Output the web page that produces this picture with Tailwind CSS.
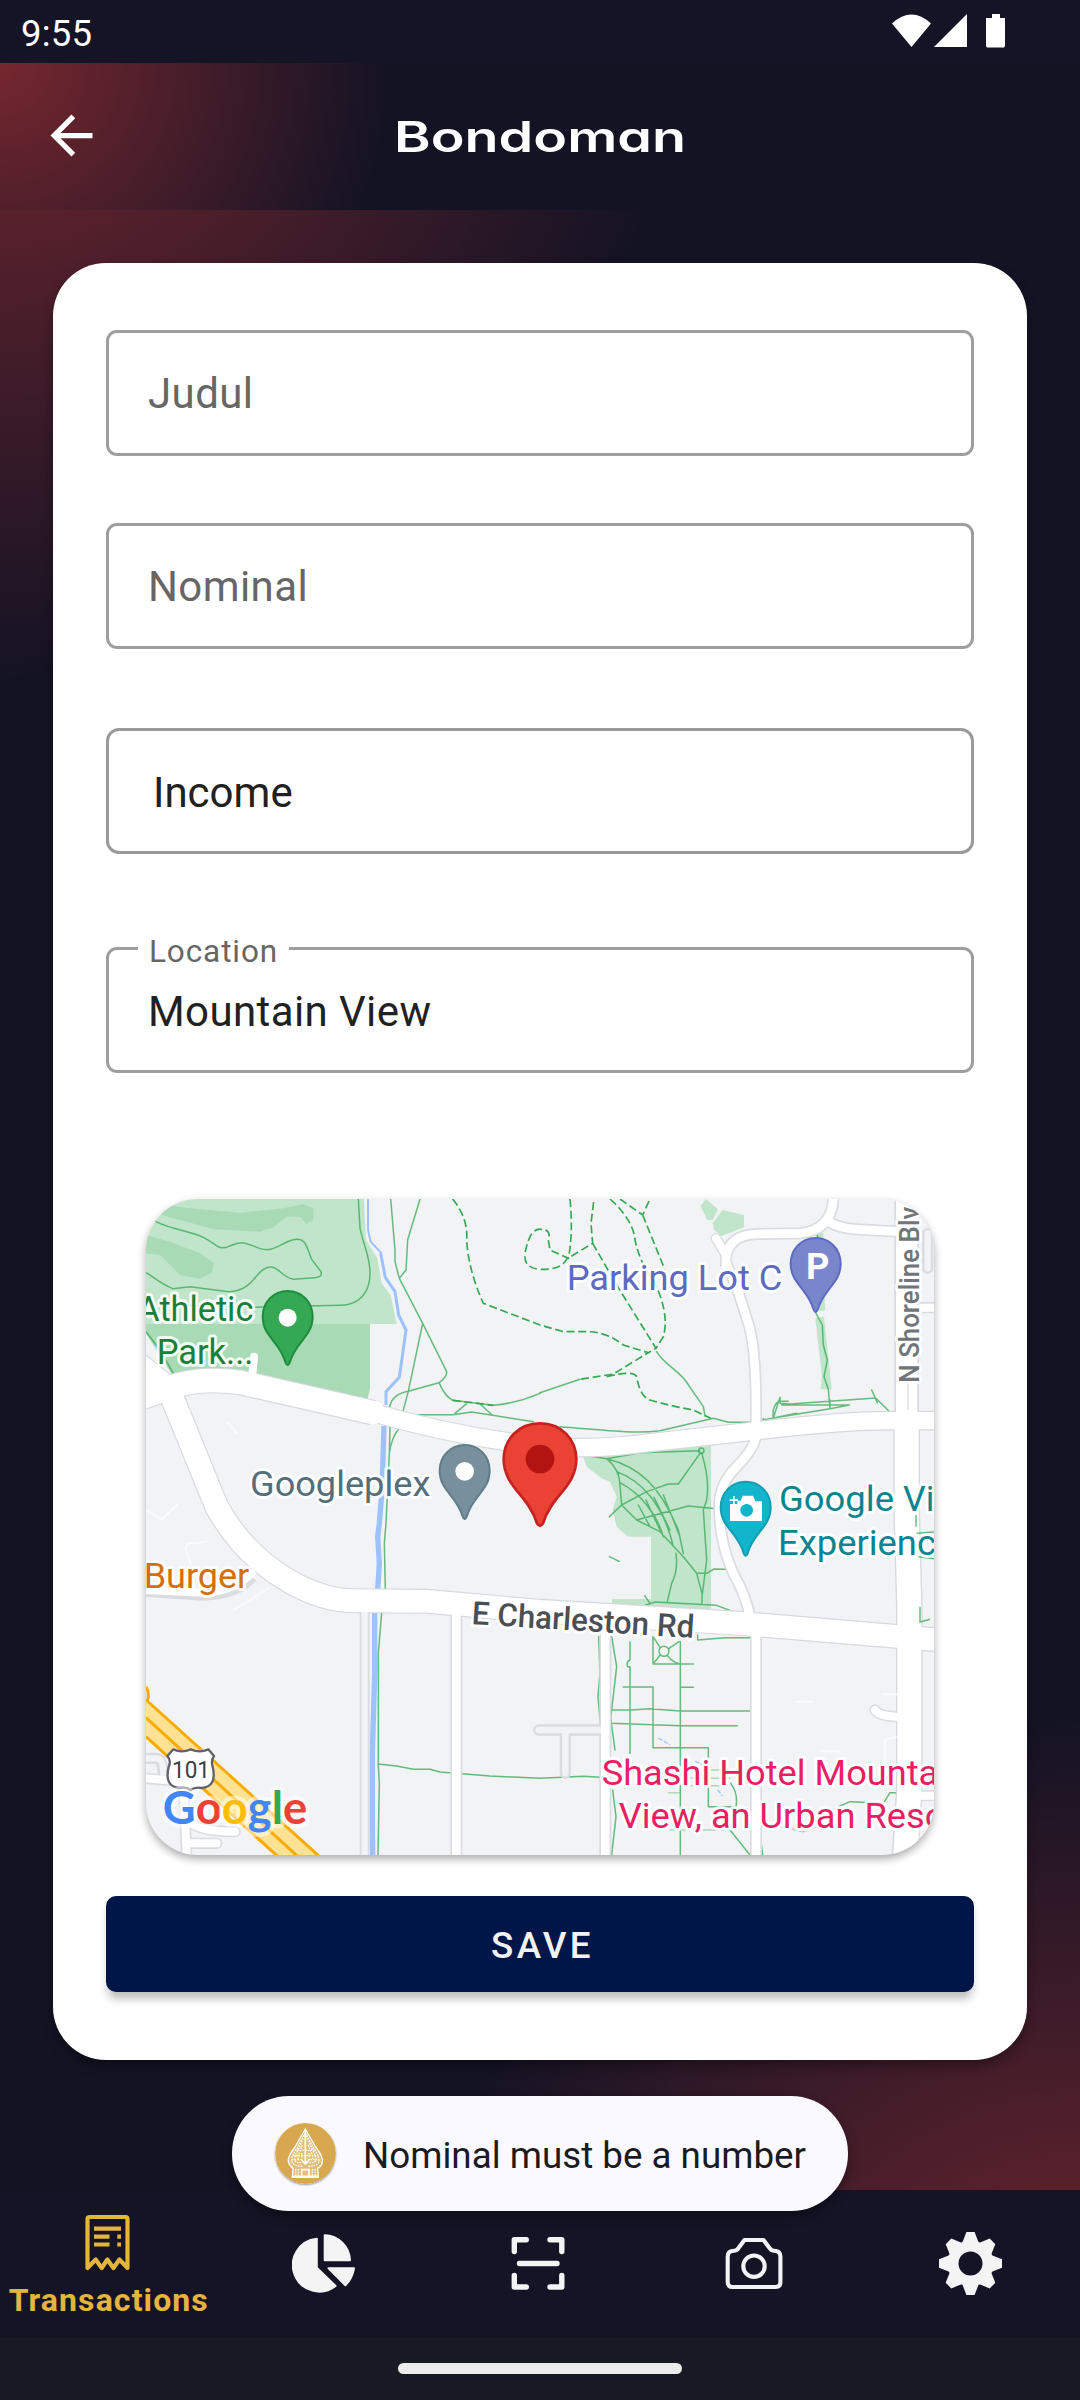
<!DOCTYPE html>
<html lang="id">
<head>
<meta charset="utf-8">
<title>Bondoman</title>
<script src="https://cdn.jsdelivr.net/npm/@tailwindcss/browser@4"></script>
</head>
<body class="w-[1080px] h-[2400px] overflow-hidden flex flex-col font-['Roboto',sans-serif] bg-[#141324]">

<!-- status bar -->
<header class="h-[63px] shrink-0 bg-[#151426] flex items-center justify-between pl-[21px] pr-[69px] text-white">
  <span class="text-[36.5px] leading-[63px] tracking-[0.2px] pt-[3px]">9:55</span>
  <svg class="w-[120px] h-[36px] mt-[-2px]" viewBox="0 0 120 36" fill="#fff">
    <path d="M1 10.500Q20.500-7.500 40 10.500L20.500 34Z"/>
    <path d="M43 34L76 1V34Z"/>
    <path d="M101 1h8v4h5v28l-1 1.500h-17l-1-1.500H95V5h6z"/>
  </svg>
</header>

<!-- app bar -->
<div class="h-[147px] shrink-0 flex items-center bg-[radial-gradient(circle_388px_at_0_0,#76272f_0%,#141324_100%)]">
  <svg class="w-[63px] h-[63px] ml-[40px] mb-[2px]" viewBox="0 0 24 24" fill="#fff"><path d="M20 11H7.830l5.590-5.590L12 4l-8 8 8 8 1.410-1.410L7.830 13H20z"/></svg>
  <svg class="w-[310px] h-[65px] ml-[282px]" viewBox="0 0 310 65">
    <text x="9" y="48" class="font-['Inter',sans-serif] font-semibold text-[42px] [font-feature-settings:'cv11']" fill="#fff" textLength="292" lengthAdjust="spacingAndGlyphs">Bondoman</text>
  </svg>
</div>

<main class="h-[1980px] shrink-0 px-[53px] pt-[53px] bg-[radial-gradient(circle_680px_at_0_-210px,#76272f_0%,rgba(20,19,36,0)_100%),radial-gradient(circle_680px_at_1080px_2190px,#76272f_0%,rgba(20,19,36,0)_100%)]">
  <section class="h-[1797px] rounded-[53px] bg-white px-[53px] pt-[67px] flex flex-col shadow-[0_6px_12px_rgba(0,0,0,0.35)] tracking-[0.4px] text-[42px]">
    <div class="h-[126px] shrink-0 border-[3px] border-[#9e9e9e] rounded-[11px] flex items-center pl-[39px] text-[#666]">Judul</div>
    <div class="h-[126px] shrink-0 mt-[67px] border-[3px] border-[#9e9e9e] rounded-[11px] flex items-center pl-[39px] text-[#666]">Nominal</div>
    <div class="h-[126px] shrink-0 mt-[79px] border-[3px] border-[#9a9a9a] rounded-[13px] flex items-center pl-[44px] pt-[2px] text-[#212121] tracking-normal">Income</div>
    <div class="h-[126px] shrink-0 mt-[93px] border-[3px] border-[#9e9e9e] rounded-[11px] relative flex items-center pl-[39px] pt-[2px] text-[#212121] tracking-[0.4px]">
      <span class="absolute left-[29px] top-[-17px] px-[11px] bg-white text-[#666] text-[31.5px] leading-[38px] tracking-[0.9px]">Location</span>
      Mountain View
    </div>

    <!-- map -->
    <div class="w-[788px] h-[656px] shrink-0 mt-[126px] ml-[40px] rounded-[52px] overflow-hidden bg-[#f1f3f5] shadow-[0_4px_9px_rgba(0,0,0,0.33)]">
      <svg class="w-full h-full block" viewBox="18 27 2364 1968" fill="none">
        <!-- parks -->
        <path fill="#c1e5cb" d="M18 27H672L678 150L712 205L725 280L752 315L770 402H690L18 410Z"/>
        <path fill="#a8dab5" d="M60 42L150 55L300 68L430 55L490 42L520 55V90L500 102L480 80H440L400 112L360 125L220 118L130 92L65 75Z"/>
        <path fill="#a8dab5" d="M18 135L90 155L180 190L222 220L215 248L180 266L120 255L60 195L18 190Z"/>
        <path fill="#a8dab5" d="M18 402H690V595L680 640L100 560L18 430Z"/>
        <g fill="#c1e5cb">
          <path d="M1682 48L1698 27L1734 58L1718 90H1702Z"/>
          <path d="M1718 98L1748 60L1812 75V112L1745 138L1722 120Z"/>
          <path d="M2028 128H2050L2055 362H2036ZM2026 385L2052 380L2075 598H2042L2046 560Z"/>
          <path d="M1328 797L1400 790L1713 762V1264L1416 1240V1227H1533V1040H1465L1430 1010L1418 960L1430 920L1410 875L1385 865L1340 830Z"/>
        </g>
        <!-- creek -->
        <g stroke="#9dc2ff" fill="none">
          <path stroke-width="6" d="M684 27V120L692 155L725 190"/>
          <path stroke-width="9" d="M722 190L736 262L765 305L776 375L798 420L778 562L738 605V645"/>
          <path stroke-width="16" d="M732 708L726 900L718 1000L713 1040L718 1120L713 1198M704 1268V1450L697 1690V1920L698 1995"/>
        </g>
        <!-- trails -->
        <g stroke="#34a853" stroke-opacity=".75" stroke-width="4.500" stroke-linejoin="round" stroke-linecap="round">
          <path d="M48 95C90 118 150 122 190 142S235 182 265 170S300 150 350 172S420 158 460 149S500 175 515 208L543 245Q548 262 525 263L460 268C425 260 420 235 395 231S350 260 330 280S280 308 255 304L150 290L98 296C60 280 40 260 18 248"/>
          <path d="M655 27L660 115C675 180 690 200 690 250S665 345 600 346L330 352L110 346"/>
          <path d="M18 425L60 480L100 550"/>
          <path d="M752 27L765 180V215L778 265L848 400L920 545Q922 560 897 578L805 604Q755 612 748 655M840 27L803 150L798 240L778 265M848 400L805 604L788 668L820 674H940L995 666L1180 695M897 578Q915 620 938 631L1060 646Q1130 640 1200 610M945 670L980 641M1020 642L1057 675"/>
          <path d="M750 710L748 790L738 1000L733 1060L736 1200M778 715Q755 740 748 790M725 1268L715 1390V1730L718 1780L714 1995M714 1722L770 1728L820 1738H870L900 1746L1050 1758L1200 1765L1330 1759L1380 1762"/>
          <path d="M1200 608L1320 568M1550 485C1570 520 1600 530 1635 570L1690 650L1695 678M1720 685L1765 697H1835L1970 670M1260 710C1390 720 1480 732 1560 722L1720 685M1900 684L1920 622V640L1950 642L2207 624L2252 668M1900 684L2070 656V630M1925 645H2128L2070 656M2195 600L2212 638M2028 128L2038 150M2028 370L2047 405L2050 465L2062 510L2052 560L2065 598L2070 656M1900 684Q1895 650 1915 634H1945M1870 686V698"/>
          <path d="M1315 793L1400 806L1500 788L1680 782M1685 790Q1710 870 1700 930L1690 960L1700 1110L1686 1220V1240M1400 806Q1440 840 1440 885L1445 945L1520 905L1585 882H1615L1680 790M1445 945L1408 980M1445 945L1490 990L1645 948L1730 956M1400 806C1500 830 1560 890 1615 1020L1630 1090M1430 845C1500 870 1570 940 1600 1070M1440 878C1500 910 1550 970 1570 1040M1490 990L1560 1025L1630 1100L1670 1150L1686 1210M1495 945L1530 1010M1518 930L1560 1020M1542 922L1590 1020M1570 915L1620 1040M1608 1090Q1615 1140 1595 1180L1582 1235M1670 1150H1700L1722 1137L1760 1138M1395 1242L1510 1248L1545 1236L1730 1246L1798 1272M1408 1100L1438 1114M1514 1217L1530 1240"/>
          <circle cx="1684" cy="782" r="8"/>
          <path d="M1376 1340L1380 1450L1374 1520L1382 1610V1760M1415 1340L1430 1430L1412 1585L1425 1680M1418 1800L1428 1880L1415 1995M1470 1356V1410Q1458 1415 1463 1430H1470V1605M1450 1491H1540M1470 1605V1690M1539 1340V1422H1660M1539 1340L1560 1372M1539 1422L1560 1396M1617 1355L1586 1376M1583 1398Q1600 1418 1620 1422M1621 1355V1995M1621 1492H1660M1539 1491V1673H1705V1850H1790M1412 1560H1472L1530 1556L1621 1563H1833M1412 1600L1621 1607H1792M1673 1335V1350L1755 1343H1835"/>
          <circle cx="1572" cy="1384" r="15"/>
          <path stroke-opacity=".35" d="M1455 1795V1740H1830M1560 1765H1770M1590 1787H1740M1586 1808H1620M1590 1920H1770M1860 1895L1990 1925L2060 1900L2100 1850"/>
          <path d="M1772 1780Q1795 1810 1788 1850M1770 1920L1830 1995M1860 1930L1868 1995M2095 1850L2130 1835L2230 1840L2250 1808H2270"/>
        </g>
        <g stroke="#34a853" stroke-width="5" stroke-dasharray="24 11">
          <path d="M938 27Q985 85 980 150Q985 240 1030 340L1200 405L1270 425H1340Q1400 425 1450 465L1525 488L1420 552L1320 568"/>
          <path d="M1290 27Q1300 130 1285 205L1230 180L1225 150Q1235 120 1205 118Q1170 110 1155 190Q1150 235 1200 238Q1265 240 1280 207L1358 160L1353 100L1362 27"/>
          <path d="M1358 160L1430 285L1548 475L1525 488M1410 27Q1480 90 1485 150Q1500 220 1540 270Q1590 370 1570 440L1548 475M1440 27L1508 75L1530 27M1508 75L1575 240M1400 560Q1480 540 1490 560Q1500 620 1530 630Q1600 650 1660 660L1712 685M938 631L1060 646"/>
        </g>
        <path stroke="#9dc2ff" stroke-width="4" stroke-dasharray="14 5" d="M1555 1644L1590 1664M1665 1713L1688 1725M1733 1800L1748 1818"/>
        <!-- small streets -->
        <g stroke="#dadce0" stroke-linejoin="round" stroke-linecap="round" stroke-width="34">
          <path d="M674 1268V1995" stroke-width="30"/>
          <path d="M1196 1620H1385M1276 1630V1750M2205 1560Q2215 1578 2270 1580M2330 1817H2382M2363 130V235M2345 353H2382"/>
          <path d="M18 1765L130 1775L140 1995M130 1880Q160 1925 285 1925M140 1960H230M18 1705H50Q70 1705 70 1770"/>
          <path d="M1728 145L1758 195" stroke-width="32"/>
        </g>
        <g stroke="#dadce0" stroke-width="36" fill="none">
          <path d="M1758 230V205Q1765 135 1850 132L1980 130Q2075 120 2080 27M2065 95Q2100 115 2150 118L2280 125M1758 215Q1770 250 1790 290L1820 385Q1850 460 1848 690V740Q1840 780 1790 830Q1740 880 1738 940Q1735 1050 1780 1150Q1820 1220 1832 1290"/>
          <path d="M949 1270V1995M1396 1310V1995M1848 1340V1995"/>
          <path d="M18 1203L190 1214Q290 1212 335 1160"/>
        </g>
        <!-- main roads -->
        <g stroke="#d7d9de">
          <path stroke-width="75" d="M-20 510L85 595Q140 730 230 950Q310 1095 450 1175Q550 1232 640 1232L860 1234L1200 1264L1800 1300L2400 1350"/>
          <path stroke-width="77" d="M-30 635L85 595Q170 560 300 577L700 668"/>
          <path stroke-width="59" d="M680 664L700 668Q900 726 1100 755Q1250 782 1440 768L1800 728Q2100 692 2250 692H2400"/>
          <path stroke-width="74" d="M2300 27V690"/>
          <path stroke-width="80" d="M2300 690V960L2308 1250V1800L2295 1995"/>
        </g>
        <g stroke="#f1f3f5" stroke-linejoin="round" stroke-linecap="round" stroke-width="19"><path d="M674 1268V1995M1196 1620H1385M1276 1630V1750M18 1705H50Q70 1705 70 1750M2363 130V235"/></g>
        <g stroke="#fff" stroke-linejoin="round" stroke-linecap="round">
          <path stroke-width="24" d="M2205 1560Q2215 1578 2270 1580M2330 1817H2382M2345 353H2382M18 1765L130 1775L140 1995M130 1880Q160 1925 285 1925M140 1960H230M1728 145L1758 195"/>
          <path stroke-width="26" d="M1758 230V205Q1765 135 1850 132L1980 130Q2075 120 2080 27M2065 95Q2100 115 2150 118L2280 125M1758 215Q1770 250 1790 290L1820 385Q1850 460 1848 690V740Q1840 780 1790 830Q1740 880 1738 940Q1735 1050 1780 1150Q1820 1220 1832 1290M949 1250V2005M1396 1290V2005M1848 1310V2005"/>
          <path stroke-width="24" d="M18 1200L190 1208Q280 1205 335 1150"/>
          <path stroke-width="24" d="M338 545L342 500"/>
          <path stroke-width="68" d="M-20 510L85 595Q140 730 230 950Q310 1095 450 1175Q550 1232 640 1232L860 1234L1200 1264L1800 1300L2400 1350"/>
          <path stroke-width="70" d="M-30 635L85 595Q170 560 300 577L700 668"/>
          <path stroke-width="52" d="M700 668Q900 726 1100 755Q1250 782 1440 768L1800 728Q2100 692 2250 692H2400"/>
          <path stroke-width="64" d="M2300 27V690"/>
          <path stroke-width="72" d="M2300 690V960L2308 1250V1800L2295 2010"/>
          <path stroke-width="7" stroke-opacity=".6" d="M262 697L292 732M18 960L65 988L110 945M152 1120Q120 1050 165 1060L200 1055M280 1260L340 1225L385 1195M1970 1535H2018M2230 1513H2272M2045 1684H2100M2270 1640L2235 1650V1720"/>
        </g>
        <g stroke="#34a853" stroke-opacity=".75" stroke-width="4.500"><path d="M2328 975V1010M2340 1250V1296L2370 1288M2330 1030L2382 1026M2335 1100L2382 1106"/></g>
        <path stroke="#dadce0" stroke-width="4" d="M2304 570V660"/>
        <!-- highway -->
        <path fill="#fde293" d="M18 1530L550 2010H425L18 1645Z"/>
        <path stroke="#f9ab00" stroke-width="9" d="M18 1490Q30 1510 22 1533L550 2010M18 1583L485 2010M18 1640L425 2010"/>
        <!-- route shield -->
        <path fill="#fff" stroke="#5f6368" stroke-width="7" stroke-linejoin="round" d="M100 1678Q125 1690 152 1678Q180 1690 205 1678L222 1698Q212 1712 218 1730Q232 1790 185 1794Q165 1790 152 1800Q140 1790 118 1794Q72 1790 86 1730Q95 1712 82 1698Z"/>
        <text x="96" y="1765" font-size="73" fill="#3c4043" textLength="114" lengthAdjust="spacingAndGlyphs" class="tracking-normal">101</text>

        <!-- place labels -->
        <g font-size="107" stroke="#fff" stroke-opacity=".85" stroke-width="18" stroke-linejoin="round" class="[paint-order:stroke] tracking-normal">
          <text x="340" y="394" text-anchor="end" fill="#188038" textLength="348" lengthAdjust="spacingAndGlyphs">Athletic</text>
          <text x="50" y="523" fill="#188038" textLength="290" lengthAdjust="spacingAndGlyphs">Park...</text>
          <text x="330" y="918" fill="#546e7a" textLength="541" lengthAdjust="spacingAndGlyphs">Googleplex</text>
          <text x="1280" y="299" fill="#5c6bc0" textLength="647" lengthAdjust="spacingAndGlyphs">Parking Lot C</text>
          <text x="1917" y="964" fill="#0a8590" textLength="345" lengthAdjust="spacingAndGlyphs">Google</text>
          <text x="2289" y="964" fill="#0a8590">Vi</text>
          <text x="1914" y="1094" fill="#0a8590" textLength="474" lengthAdjust="spacingAndGlyphs">Experienc</text>
          <text x="11" y="1195" fill="#d56e0c" textLength="317" lengthAdjust="spacingAndGlyphs">Burger</text>
          <text x="1385" y="1785" fill="#e91e63" textLength="1010" lengthAdjust="spacingAndGlyphs">Shashi Hotel Mounta</text>
          <text x="1436" y="1914" fill="#e91e63" textLength="980" lengthAdjust="spacingAndGlyphs">View, an Urban Reso</text>
          <text transform="translate(994 1302) rotate(3.600)" font-size="96" font-weight="500" fill="#4b4f54" textLength="668" lengthAdjust="spacingAndGlyphs">E Charleston Rd</text>
          <text transform="translate(2338 578) rotate(-90)" font-size="82" font-weight="500" fill="#70757a" textLength="528" lengthAdjust="spacingAndGlyphs">N Shoreline Blv</text>
        </g>

        <!-- place pins -->
        <g stroke-width="6" stroke-linejoin="round">
          <path fill="#34a853" stroke="#1e8e3e" d="M443 303C400 303 368 337 368 380C368 440 420 455 437 518Q443 533 449 518C466 455 518 440 518 380C518 337 486 303 443 303Z"/>
          <circle cx="443" cy="383" r="27" fill="#fff"/>
          <path fill="#78909c" stroke="#607d8b" transform="translate(531 462)" d="M443 303C400 303 368 337 368 380C368 440 420 455 437 518Q443 533 449 518C466 455 518 440 518 380C518 337 486 303 443 303Z"/>
          <circle cx="974" cy="844" r="28" fill="#fff"/>
          <path fill="#7986cb" stroke="#5c6bc0" transform="translate(1584 -159)" d="M443 303C400 303 368 337 368 380C368 440 420 455 437 518Q443 533 449 518C466 455 518 440 518 380C518 337 486 303 443 303Z"/>
          <text x="1998" y="266" font-size="109" font-weight="700" fill="#fff" stroke="none" class="tracking-normal">P</text>
          <path fill="#12b5cb" stroke="#129eaf" transform="translate(1374 572)" d="M443 303C400 303 368 337 368 380C368 440 420 455 437 518Q443 533 449 518C466 455 518 440 518 380C518 337 486 303 443 303Z"/>
          <path fill="#fff" d="M1770 942h22v-10h10l6-15h31l7 17h20v59h-96zM1779 918h5v10h10v5h-10v10h-5v-10h-10v-5h10z"/>
          <circle cx="1820" cy="961" r="19" fill="#12b5cb"/>
          <path fill="#ea4335" stroke="#c5221f" stroke-width="8" d="M1200 700C1137 700 1091 747 1091 808C1091 890 1165 915 1191 1000Q1200 1015 1209 1000C1235 915 1309 890 1309 808C1309 747 1263 700 1200 700Z"/>
          <circle cx="1200" cy="807" r="43" fill="#b31412"/>
        </g>

        <text x="68" y="1901" font-size="138" font-weight="700" stroke="#fff" stroke-opacity=".5" stroke-width="26" stroke-linejoin="round" textLength="434" lengthAdjust="spacingAndGlyphs" class="font-['Lato',sans-serif] tracking-normal [paint-order:stroke]"><tspan fill="#4285f4">G</tspan><tspan fill="#ea4335">o</tspan><tspan fill="#fbbc04">o</tspan><tspan fill="#4285f4">g</tspan><tspan fill="#34a853">l</tspan><tspan fill="#ea4335">e</tspan></text>
      </svg>
    </div>

    <button class="h-[96px] shrink-0 mt-[41px] rounded-[10px] bg-[#001649] text-[#f3f3f3] text-[36.75px] font-medium tracking-[3.3px] pt-[3px] pl-[5px] shadow-[0_9px_8px_-2px_rgba(0,0,0,0.25)]">SAVE</button>
  </section>
</main>

<!-- bottom navigation -->
<nav class="h-[147px] w-[1078px] shrink-0 bg-[#151426] shadow-[2px_0_0_#151426] grid grid-cols-5 justify-items-center">
  <div class="flex flex-col items-center pt-[21px] text-[#e4b43c]">
    <svg class="w-[63px] h-[63px]" viewBox="0 0 63 63" fill="none" stroke="#e4b43c" stroke-width="4.200">
      <path stroke-linejoin="round" d="M11.500 57V8q0-2 2-2h36q2 0 2 2V57L43.400 48.500L37.400 57L31.400 48.500L25.700 57L19.700 48.500Z"/>
      <path d="M18 17.700H45M18 25.700H33.500M41.300 25.700H45M18 33.500H33.500M41.300 33.500H45"/>
    </svg>
    <span class="text-[32px] leading-[38px] font-bold tracking-[1.1px] mt-[7px] ml-[2px]">Transactions</span>
  </div>
  <svg class="w-[63px] h-[63px] mt-[42px]" viewBox="0 0 63 63" fill="#f4f4f4" stroke="#f4f4f4" stroke-width="2" stroke-linejoin="round">
    <path d="M24.800 6.700A26.500 26.500 0 1 0 43.600 54L24.800 35.700Z"/>
    <path d="M32.700 3.300A26 26 0 0 1 58 28.300H32.700ZM36.500 36.300H62Q60.500 46 53.400 53.300Z"/>
  </svg>
  <svg class="w-[63px] h-[63px] mt-[42px]" viewBox="0 0 63 63" fill="none" stroke="#f4f4f4" stroke-width="5.400" stroke-linecap="round" stroke-linejoin="round">
    <path d="M7.300 19.500V7.700H19.300M43 7.700H54.800V19.500M54.800 43.500V55H43M19.300 55H7.300V43.500M12.500 31.500H50"/>
  </svg>
  <svg class="w-[63px] h-[63px] mt-[42px]" viewBox="0 0 63 63" fill="none" stroke="#f4f4f4" stroke-width="4.100" stroke-linejoin="round">
    <path d="M4.700 24.500Q4.700 18.700 11 18.700Q14 18.700 15.500 16L21.500 8H40.500L46.500 16Q48.500 18.700 51 18.700Q57.400 18.700 57.400 24.500V50Q57.400 55 52.500 55H9.500Q4.700 55 4.700 50Z"/>
    <circle cx="31" cy="34.200" r="10.700"/>
  </svg>
  <svg class="w-[63px] h-[63px] mt-[42px]" viewBox="0 0 63 63" fill="#f4f4f4" fill-rule="evenodd">
    <path d="M27.400 0H35.600L39 9Q39.800 11 41.800 10.200L50.700 6.600L56.300 12.200L52.800 21Q52 23 54 23.800L63 27.200V35.800L54 39.200Q52 40 52.800 42L56.300 50.800L50.700 56.400L41.800 52.800Q39.800 52 39 54L35.600 63H27.400L24 54Q23.200 52 21.200 52.800L12.300 56.400L6.700 50.800L10.200 42Q11 40 9 39.200L0 35.800V27.200L9 23.800Q11 23 10.200 21L6.700 12.200L12.300 6.600L21.200 10.200Q23.200 11 24 9ZM31.500 19.500a12 12 0 1 0 0 24a12 12 0 1 0 0-24Z"/>
  </svg>
</nav>

<footer class="h-[63px] shrink-0 bg-[#171924] flex justify-center pt-[26px]">
  <div class="w-[284px] h-[11px] rounded-full bg-[#ececec]"></div>
</footer>

<!-- toast -->
<div class="absolute left-[232px] top-[2096px] w-[616px] h-[115px] rounded-[57px] bg-[#faf9ff] flex items-center pl-[43px] shadow-[0_5px_11px_rgba(0,0,0,0.4)]">
  <svg class="w-[61px] h-[61px] mt-[-1px] shrink-0 rounded-full shadow-[0_1px_2px_rgba(0,0,0,0.4)]" viewBox="0 0 183 183" fill="none">
    <circle cx="91.500" cy="91.500" r="91.500" fill="#d8a84e"/>
    <g stroke="#fff">
      <path fill="#fff" fill-opacity=".25" stroke-width="4" d="M91 18L60 72Q38 100 40 116Q44 130 54 136L52 163H130L128 136Q140 130 142 116Q144 100 122 72Z"/>
      <path stroke-width="5" d="M91 20V124M54 160H128M80 140H102V160H80ZM91 124L78 108M91 124L104 108"/>
      <path stroke-width="4" stroke-dasharray="5 3" d="M91 30L66 76Q48 100 50 116Q56 130 84 130M91 30L116 76Q134 100 132 116Q126 130 98 130M84 46L72 76Q56 100 60 114Q70 122 80 118M98 46L110 76Q126 100 122 114Q112 122 102 118M82 66L74 88Q66 100 70 108M100 66L108 88Q116 100 112 108M80 90V104M102 90V104M62 138V158M70 138V158M112 138V158M120 138V158M66 82H116M54 98H128M50 110H76M106 110H132"/>
    </g>
  </svg>
  <span class="text-[36.75px] ml-[27px] mt-[4px] text-[#1b1b1f] whitespace-nowrap">Nominal must be a number</span>
</div>
</body>
</html>
